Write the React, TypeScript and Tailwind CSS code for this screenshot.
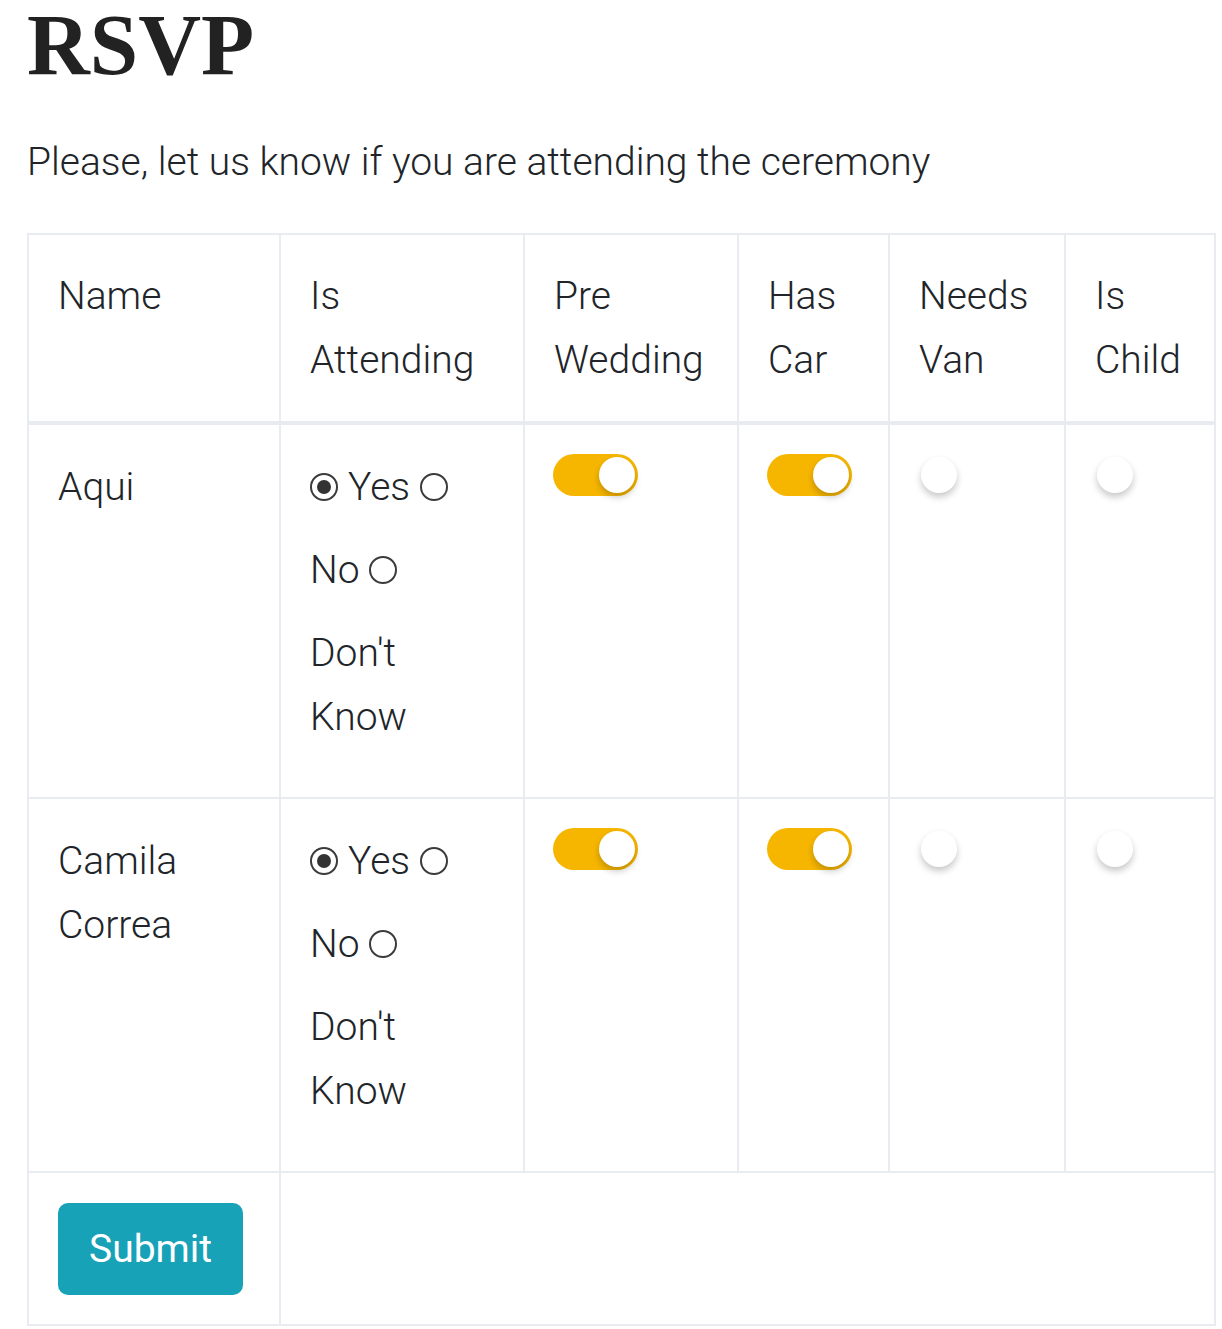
import React from "react";

type Guest = {
  name: string;
  attending: "yes" | "no" | "unknown";
  preWedding: boolean;
  hasCar: boolean;
  needsVan: boolean;
  isChild: boolean;
};

const guests: Guest[] = [
  { name: "Aqui", attending: "yes", preWedding: true, hasCar: true, needsVan: false, isChild: false },
  { name: "Camila Correa", attending: "yes", preWedding: true, hasCar: true, needsVan: false, isChild: false },
];

const Radio = ({ checked }: { checked?: boolean }) => (
  <span className="inline-flex h-[28px] w-[28px] shrink-0 items-center justify-center rounded-full border-[2.5px] border-[#3b3b3b] bg-white">
    {checked && <span className="h-[14px] w-[14px] rounded-full bg-[#333]" />}
  </span>
);

const Toggle = ({ on }: { on: boolean }) => (
  <div
    className={
      on
        ? "flex h-[42px] w-[85px] items-center justify-end rounded-full bg-[#f6b600] px-[3px]"
        : "flex h-[42px] w-[85px] items-center justify-start rounded-full px-[3px]"
    }
  >
    <span className="h-[36px] w-[36px] rounded-full bg-white shadow-[0_4px_7px_rgba(0,0,0,0.22)]" />
  </div>
);

const head = "border-2 border-[#e8ebef] px-[29px] py-[29px] text-left align-top font-light";
const cell = "border-2 border-[#e8ebef] px-[29px] pt-[30px] pb-[29px] align-top";
const toggleCell = "border-2 border-[#e8ebef] px-[28px] pt-[29px] pb-[29px] align-top";

const App = () => {
  return (
    <div className="min-h-[1329px] bg-white pl-[27px] pr-[8px] text-[#212529]" style={{ fontFamily: "Roboto, 'Noto Sans', sans-serif" }}>
      <h1 className="pt-[1px] text-[87px] leading-none font-bold text-[#222]" style={{ fontFamily: "'Liberation Serif', 'Times New Roman', serif" }}>
        RSVP
      </h1>
      <p className="mt-[44px] text-[39px] leading-[60px] font-light">
        Please, let us know if you are attending the ceremony
      </p>

      <table className="mt-[41px] w-[1187px] table-fixed border-collapse text-[39px] leading-[64px] font-light">
        <colgroup>
          <col className="w-[252px]" />
          <col className="w-[244px]" />
          <col className="w-[214px]" />
          <col className="w-[151px]" />
          <col className="w-[176px]" />
          <col className="w-[150px]" />
        </colgroup>
        <thead>
          <tr className="border-b-[4px] border-[#e8ebef]">
            <th className={head}>Name</th>
            <th className={head}>Is Attending</th>
            <th className={head}>Pre Wedding</th>
            <th className={head}>Has Car</th>
            <th className={head}>Needs Van</th>
            <th className={head}>Is Child</th>
          </tr>
        </thead>
        <tbody>
          {guests.map((g) => (
            <tr key={g.name}>
              <td className={cell}>{g.name}</td>
              <td className={cell}>
                <div className="mb-[19px] flex items-center gap-[10px]">
                  <Radio checked={g.attending === "yes"} />
                  <span>Yes</span>
                  <Radio checked={g.attending === "no"} />
                </div>
                <div className="mb-[19px] flex items-center gap-[9px]">
                  <span>No</span>
                  <Radio checked={g.attending === "unknown"} />
                </div>
                <div className="mb-[19px]">Don't Know</div>
              </td>
              <td className={toggleCell}>
                <Toggle on={g.preWedding} />
              </td>
              <td className={toggleCell}>
                <Toggle on={g.hasCar} />
              </td>
              <td className={toggleCell}>
                <Toggle on={g.needsVan} />
              </td>
              <td className={toggleCell}>
                <Toggle on={g.isChild} />
              </td>
            </tr>
          ))}
          <tr>
            <td className={cell}>
              <button className="h-[92px] w-[185px] rounded-[10px] bg-[#17a2b8] text-[39px] font-normal leading-none text-white">
                Submit
              </button>
            </td>
            <td className={cell} colSpan={5} />
          </tr>
        </tbody>
      </table>
    </div>
  );
};

export default App;
